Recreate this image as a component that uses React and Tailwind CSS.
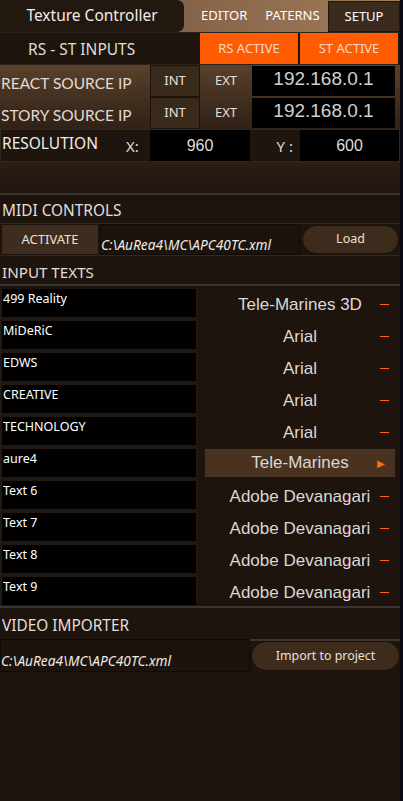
import React from 'react';

const texts = ['499 Reality', 'MiDeRiC', 'EDWS', 'CREATIVE', 'TECHNOLOGY', 'aure4', 'Text 6', 'Text 7', 'Text 8', 'Text 9'];
const fonts = ['Tele-Marines 3D', 'Arial', 'Arial', 'Arial', 'Arial', 'Tele-Marines', 'Adobe Devanagari', 'Adobe Devanagari', 'Adobe Devanagari', 'Adobe Devanagari'];

function IpRow({ label }) {
  return (
    <div className="flex h-[32px]">
      <div className="w-[150px] flex items-end pb-[6px] pl-[1px] font-['Lato',sans-serif] text-[15.5px] text-[#e2dad2] leading-none">
        {label}
      </div>
      <div className="w-[50px] bg-[#3a2a1c] border border-[#1c140c] flex items-center justify-center text-[13px] text-[#e8e0d8]">
        INT
      </div>
      <div className="w-[52px] flex items-center justify-center text-[13px] text-[#e8e0d8]">
        EXT
      </div>
      <div className="w-[143px] mt-[1px] h-[30px] bg-black flex items-start justify-center pt-[1px] font-['Liberation_Sans',Arial,sans-serif] text-[19px] text-[#d0d0d0] leading-tight">
        192.168.0.1
      </div>
    </div>
  );
}

export default function App() {
  return (
    <div className="w-[403px] h-[801px] bg-[#1c140d] flex overflow-hidden font-['Noto_Sans','Open_Sans',sans-serif]">
      <div className="w-[400px] flex flex-col">
        {/* header */}
        <div className="h-[32px] flex items-stretch bg-gradient-to-r from-[#5e4430] via-[#86654a] to-[#a27d59]">
          <div className="w-[184px] bg-[#211810] rounded-r-[7px] flex items-center justify-center text-[15.5px] text-[#f0ece8]">
            Texture Controller
          </div>
          <div className="flex-1 flex items-center gap-[18px] pl-[17px] text-[13px] text-white">
            <span>EDITOR</span>
            <span>PATERNS</span>
          </div>
          <div className="w-[72px] mt-[1px] bg-[#3a2b1e] border border-[#1f170f] flex items-center justify-center text-[13px] text-white">
            SETUP
          </div>
        </div>

        {/* rs - st */}
        <div className="h-[33px] flex bg-[#1d140d] border-y border-[#2c241c]">
          <div className="w-[200px] flex items-center pl-[28px] pt-[2px] text-[15.5px] text-[#ddd]">
            RS - ST INPUTS
          </div>
          <div className="w-[98px] bg-[#ff5b00] flex items-center justify-center text-[13px] text-[#f8d8c8]">
            RS ACTIVE
          </div>
          <div className="w-[2px]" />
          <div className="w-[98px] bg-[#ff5b00] flex items-center justify-center text-[13px] text-[#f8d8c8]">
            ST ACTIVE
          </div>
        </div>

        {/* ip rows */}
        <div className="bg-gradient-to-b from-[#5a412b] to-[#2f2116]">
          <IpRow label="REACT SOURCE IP" />
          <IpRow label="STORY SOURCE IP" />
        </div>

        {/* resolution */}
        <div className="h-[33px] flex bg-[#1e150e] border border-[#2e2924]">
          <div className="w-[125px] pl-[1px] pt-[2px] text-[15.5px] text-[#f0ece8]">
            RESOLUTION
          </div>
          <div className="w-[24px] flex items-end pb-[4px] text-[15px] text-[#ddd]">
            X:
          </div>
          <div className="w-[100px] bg-black flex items-center justify-center font-['Liberation_Sans',Arial,sans-serif] text-[16px] text-[#ddd]">
            960
          </div>
          <div className="w-[50px] flex items-end justify-end pr-[7px] pb-[4px] text-[15px] text-[#ddd]">
            Y :
          </div>
          <div className="flex-1 bg-black flex items-center justify-center font-['Liberation_Sans',Arial,sans-serif] text-[16px] text-[#ddd]">
            600
          </div>
        </div>

        <div className="h-[31px] bg-gradient-to-b from-[#2c1f14] to-[#1e150e]" />
        <div className="h-[2px] bg-[#3a3530]" />

        {/* midi */}
        <div className="h-[28px] flex items-center pl-[2px] pt-[3px] text-[15.4px] text-[#e4ded8]">
          MIDI CONTROLS
        </div>
        <div className="h-[33px] flex items-stretch border-y border-[#2e2924]">
          <div className="w-[96px] ml-[2px] my-[1px] bg-[#3e2d1e] flex items-center justify-center text-[13px] text-[#e8e0d8]">
            ACTIVATE
          </div>
          <div className="w-[200px] ml-[2px] bg-[#1b130c] border border-[#100b06] flex items-end pb-[1px] text-[13.7px] italic text-[#f0ece8] leading-tight">
            C:\AuRea4\MC\APC40TC.xml
          </div>
          <div className="w-[97px] ml-[2px] my-[1px] rounded-full bg-[#3d2b1c] border border-[#1a120b] flex items-center justify-center text-[12.5px] text-[#e8e0d8]">
            Load
          </div>
        </div>

        <div className="h-[28px] flex items-center pl-[2px] pt-[4px] text-[15.2px] text-[#e4ded8]">
          INPUT TEXTS
        </div>
        <div className="h-[2px] bg-[#3a3530]" />

        {/* input texts */}
        <div className="flex pt-[3px]">
          <div className="w-[197px] bg-[#24180f] flex flex-col gap-[4px] pl-[2px] pr-[1px]">
            {texts.map((t) => (
              <div key={t} className="h-[28px] bg-black pl-[1px] pt-[1px] text-[12.5px] text-white leading-[18px]">
                {t}
              </div>
            ))}
          </div>
          <div className="flex-1 flex flex-col gap-[4px] font-['Liberation_Sans',Arial,sans-serif] text-[17px] text-[#dcd8d4]">
            {fonts.map((f, i) =>
              i === 5 ? (
                <div key={i} className="h-[28px] ml-[8px] mr-[5px] bg-[#4a3220] grid grid-cols-[20px_1fr_20px] items-center">
                  <span />
                  <span className="text-center">{f}</span>
                  <span className="text-[#ff6a10] text-[10px] pl-[2px]">▶</span>
                </div>
              ) : (
                <div key={i} className="h-[28px] grid grid-cols-[24px_1fr_24px] items-center pt-[3px]">
                  <span />
                  <span className="text-center pl-[3px]">{f}</span>
                  <span className="h-[1px] w-[9px] ml-[4px] bg-[#ff6010]" />
                </div>
              )
            )}
          </div>
        </div>

        <div className="h-[2px] mt-[1px] bg-[#3a3530]" />
        <div className="h-[31px] flex items-center pl-[2px] pt-[4px] text-[15.4px] text-[#e4ded8]">
          VIDEO IMPORTER
        </div>
        <div className="flex h-[33px]">
          <div className="w-[250px] bg-[#1b130c] border border-[#100b06] flex items-end pb-[2px] text-[13.7px] italic text-[#f0ece8] leading-tight">
            C:\AuRea4\MC\APC40TC.xml
          </div>
          <div className="flex-1 flex flex-col">
            <div className="h-[2px] bg-[#3a3530]" />
            <div className="h-[30px] ml-[1px] rounded-full bg-[#3d2b1c] border border-[#1a120b] flex items-center justify-center text-[12.4px] text-[#e8e0d8]">
              Import to project
            </div>
          </div>
        </div>
        <div className="flex-1" />
      </div>
      <div className="w-[3px] bg-[#0c0a12]" />
    </div>
  );
}
